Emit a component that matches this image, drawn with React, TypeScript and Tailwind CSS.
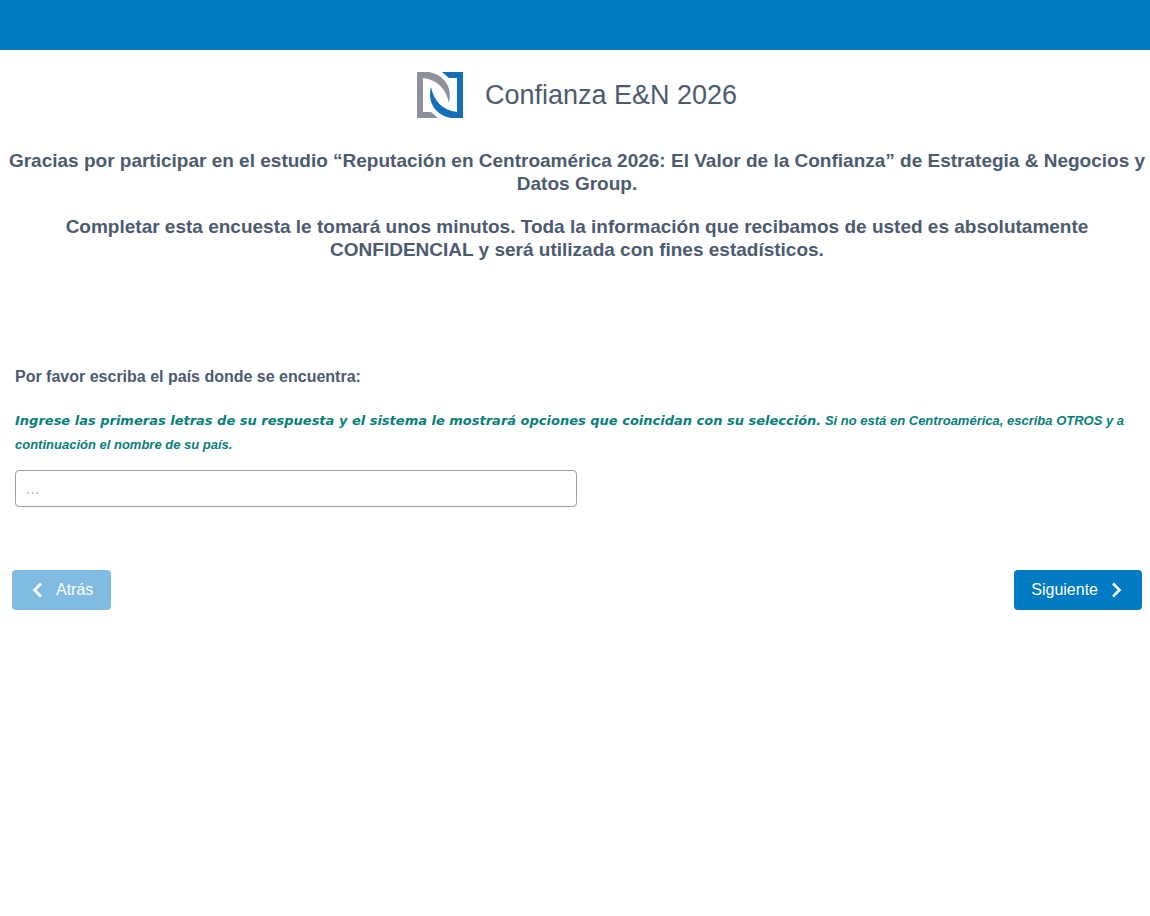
function Logo() {
  return (
    <svg viewBox="0 0 46 46" className="h-[46px] w-[46px]" aria-hidden="true">
      <path
        fill="#8e9199"
        d="M0 0H12C27 3 36 15 32 31C29 17 21 8 6 6V40H14L21 46H0Z"
      />
      <path
        fill="#146eb8"
        d="M46 46H34C19 43 10 31 14 15C17 29 25 38 40 40V6H32L25 0H46Z"
      />
    </svg>
  )
}

function App() {
  return (
    <div className="bg-white font-['Liberation_Sans',Arial,sans-serif] text-[#4c5b70]">
      <div className="h-[50px] bg-[#007ac3]" />

      <main>
        <header className="flex items-center justify-center gap-[22px] pl-3 pr-2 pt-[22px]">
          <Logo />
          <h1 className="text-[27px] leading-9">Confianza E&amp;N 2026</h1>
        </header>

        <section className="mt-[31px] space-y-5 pl-1 text-center text-[19px] font-bold leading-[23px]">
          <p>
            Gracias por participar en el estudio “Reputación en Centroamérica 2026: El
            Valor de la Confianza” de Estrategia &amp; Negocios y Datos Group.
          </p>
          <p>
            Completar esta encuesta le tomará unos minutos. Toda la información que
            recibamos de usted es absolutamente CONFIDENCIAL y será utilizada con fines
            estadísticos.
          </p>
        </section>

        <form
          className="mt-[104px] pl-3 pr-2"
          onSubmit={(event) => event.preventDefault()}
        >
          <div className="px-[3px]">
            <label htmlFor="country" className="block text-base font-bold leading-6">
              Por favor escriba el país donde se encuentra:
            </label>
            <p
              id="country-help"
              className="mt-5 text-[13px] font-bold italic leading-6 text-[#08807a]"
            >
              <strong className="font-['DejaVu_Sans',sans-serif]">
                Ingrese las primeras letras de su respuesta y el sistema le mostrará
                opciones que coincidan con su selección.
              </strong>{" "}
              Si no está en Centroamérica, escriba OTROS y a continuación el nombre de
              su país.
            </p>
            <input
              id="country"
              type="text"
              placeholder="..."
              aria-describedby="country-help"
              className="mt-[13px] block h-[37px] w-1/2 rounded border border-[#a0a0a0] px-2.5 text-base placeholder:text-[#b5b5b5]"
            />
          </div>

          <div className="mt-[63px] flex justify-between text-base text-white">
            <button
              type="button"
              disabled
              className="flex h-10 items-center gap-3.5 rounded bg-[#80bce1] pl-5 pr-[18px]"
            >
              <svg viewBox="0 0 10 16" className="h-4 w-2.5" fill="none" aria-hidden="true">
                <path d="M9 1.5L2.5 8L9 14.5" stroke="currentColor" strokeWidth="2.6" />
              </svg>
              Atrás
            </button>
            <button
              type="submit"
              className="flex h-10 items-center gap-3.5 rounded bg-[#007ac3] pl-[17px] pr-5"
            >
              Siguiente
              <svg viewBox="0 0 10 16" className="h-4 w-2.5" fill="none" aria-hidden="true">
                <path d="M1 1.5L7.5 8L1 14.5" stroke="currentColor" strokeWidth="2.6" />
              </svg>
            </button>
          </div>
        </form>
      </main>
    </div>
  )
}

export default App
